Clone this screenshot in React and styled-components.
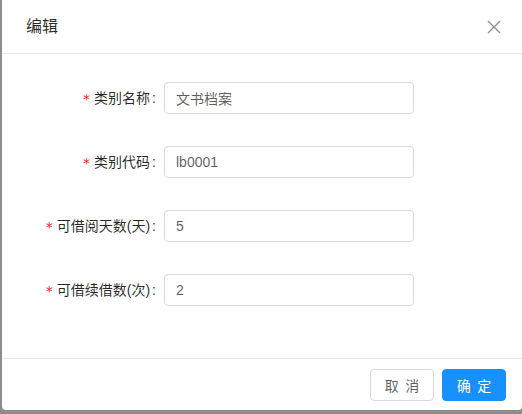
import React from "react"
import styled, { createGlobalStyle } from "styled-components"

const GlobalStyle = createGlobalStyle`
  html, body {
    margin: 0;
    padding: 0;
    background: #8c8c8c;
  }
  body {
    font-family: "Liberation Sans", "Noto Sans CJK SC", sans-serif;
    font-size: 14px;
  }
`

const fields = [
  { label: "类别名称", value: "文书档案" },
  { label: "类别代码", value: "lb0001" },
  { label: "可借阅天数(天)", value: "5" },
  { label: "可借续借数(次)", value: "2" },
]

const Modal = styled.div`
  margin-left: 2px;
  width: 520px;
  background: #fff;
  border-radius: 0 0 4px 4px;
  overflow: hidden;
`

const Header = styled.div`
  position: relative;
  height: 53px;
  padding: 0 24px;
  display: flex;
  align-items: center;
  border-bottom: 1px solid #e8e8e8;
`

const Title = styled.div`
  font-size: 16px;
  line-height: 22px;
  color: rgba(0, 0, 0, 0.85);
`

const Close = styled.button`
  position: absolute;
  top: 0;
  right: 0;
  width: 56px;
  height: 53px;
  border: 0;
  padding: 0;
  background: transparent;
  display: flex;
  align-items: center;
  justify-content: center;
  cursor: pointer;
`

// each form item keeps its 24px bottom margin, last one included
const Body = styled.div`
  padding: 24px;
`

const Row = styled.div`
  display: grid;
  grid-template-columns: 138px 250px;
  height: 40px;
  margin-bottom: 24px;
  align-items: center;
`

const Label = styled.label`
  justify-self: end;
  display: flex;
  align-items: center;
  color: rgba(0, 0, 0, 0.85);
  line-height: 20px;
  white-space: nowrap;

  &::after {
    content: ":";
    margin: 0 8px 0 2px;
  }
`

const Star = styled.span`
  color: #f5222d;
  font-family: "DejaVu Sans", sans-serif;
  font-size: 14px;
  margin-right: 4px;
  position: relative;
  top: 1px;
`

const Input = styled.input`
  box-sizing: border-box;
  width: 250px;
  height: 32px;
  padding: 4px 11px;
  border: 1px solid #d9d9d9;
  border-radius: 4px;
  font: inherit;
  font-size: 14px;
  color: rgba(0, 0, 0, 0.65);
  outline: none;
  background: #fff;
`

const Footer = styled.div`
  border-top: 1px solid #e8e8e8;
  padding: 10px 16px 9px;
  display: flex;
  justify-content: flex-end;
  gap: 8px;
`

const Button = styled.button`
  height: 32px;
  width: 64px;
  padding: 0;
  border-radius: 4px;
  font: inherit;
  font-size: 14px;
  border: 1px solid ${p => (p.$primary ? "#1890ff" : "#d9d9d9")};
  background: ${p => (p.$primary ? "#1890ff" : "#fff")};
  color: ${p => (p.$primary ? "#fff" : "rgba(0, 0, 0, 0.65)")};
  cursor: pointer;

  span {
    letter-spacing: 0.45em;
    margin-right: -0.45em;
  }
`

export default function App() {
  return (
    <>
      <GlobalStyle />
      <Modal>
        <Header>
          <Title>编辑</Title>
          <Close aria-label="close">
            <svg width="14" height="14" viewBox="0 0 14 14">
              <path d="M1 1L13 13M13 1L1 13" stroke="rgba(0,0,0,0.45)" strokeWidth="1.3" fill="none" />
            </svg>
          </Close>
        </Header>
        <Body>
          {fields.map(f => (
            <Row key={f.label}>
              <Label>
                <Star>*</Star>
                {f.label}
              </Label>
              <Input defaultValue={f.value} />
            </Row>
          ))}
        </Body>
        <Footer>
          <Button><span>取消</span></Button>
          <Button $primary><span>确定</span></Button>
        </Footer>
      </Modal>
    </>
  )
}
